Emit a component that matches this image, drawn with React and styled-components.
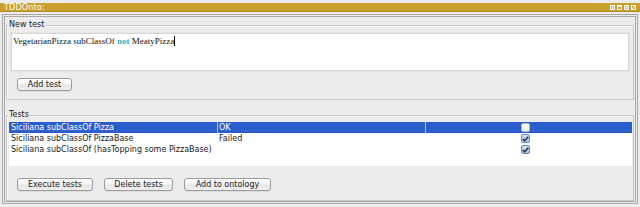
import React from "react";
import styled, { createGlobalStyle } from "styled-components";

const Global = createGlobalStyle`
  html, body { margin: 0; padding: 0; background: #ececec; }
  body { font-family: "DejaVu Sans", "Liberation Sans", sans-serif; font-size: 8px; color: #1a1a1a; }
  * { box-sizing: border-box; }
`;

const Window = styled.div`
  width: 640px;
  height: 207px;
  padding-top: 3px;
  background: #ececec;
  overflow: hidden;
`;

const TitleBar = styled.div`
  height: 9px;
  background: #cb9f2b;
  border-bottom: 1px solid #b58d22;
  display: flex;
  align-items: center;
  justify-content: space-between;
  padding: 0 4px 0 4px;
  color: #ffffff;
  font-size: 8px;
  line-height: 9px;
  letter-spacing: 0.2px;
`;

const Panel = styled.div`
  margin: 2px 2px 0 2px;
  height: 190px;
  border: 3px double #a9a9a9;
  padding: 0 1px 1px 1px;
  display: flex;
  flex-direction: column;
`;

const Group = styled.fieldset`
  margin: ${(p) => p.$top}px 0 0 0;
  padding: 0 1px;
  border: 1px solid #c9c9c9;
  box-shadow: inset 1px 1px 0 #f8f8f8;
  min-width: 0;
  flex: ${(p) => (p.$grow ? 1 : "none")};
  display: flex;
  flex-direction: column;
`;

const Legend = styled.legend`
  padding: 0 1px;
  margin-left: 0;
  font-size: 8px;
  line-height: 12px;
  color: #222;
`;

const NewBody = styled.div`
  padding: 2px 3px 8px 3px;
`;

const Editor = styled.div`
  height: 38px;
  background: #ffffff;
  border: 1px solid #d6d6d6;
  outline: 1px dotted #e0e0e0;
  padding: 2px 1px;
  font-family: "Liberation Serif", "Times New Roman", serif;
  font-size: 9px;
  line-height: 11px;
  color: #111;
`;

const Keyword = styled.span`
  color: #2fb3c6;
  font-weight: bold;
`;

const Caret = styled.span`
  display: inline-block;
  width: 1px;
  height: 10px;
  background: #000;
  vertical-align: -2px;
`;

const ButtonRow = styled.div`
  display: flex;
  gap: ${(p) => p.$gap || 11}px;
  margin-top: ${(p) => p.$top}px;
  padding-left: ${(p) => p.$left}px;
`;

const Button = styled.button`
  width: ${(p) => p.$w}px;
  height: 13px;
  padding: 0;
  margin: 0;
  border: 1px solid #9c9c9c;
  border-radius: 3px;
  background: linear-gradient(#ffffff 0%, #f6f6f6 45%, #e6e6e6 55%, #efefef 100%);
  font-family: "DejaVu Sans", "Liberation Sans", sans-serif;
  font-size: 8px;
  line-height: 11px;
  color: #222;
  box-shadow: 0 1px 0 rgba(0,0,0,0.06);
`;

const TestsBody = styled.div`
  padding: 1px 0 9px 1px;
  flex: 1;
  display: flex;
  flex-direction: column;
`;

const Table = styled.div`
  height: 44px;
  background: #ffffff;
  display: flex;
  flex-direction: column;
`;

const Row = styled.div`
  display: grid;
  grid-template-columns: 208px 208px 1fr;
  height: 11px;
  line-height: 11px;
  color: ${(p) => (p.$sel ? "#ffffff" : "#1a1a1a")};
  background-color: ${(p) => (p.$sel ? "#2a5dcc" : "transparent")};
  background-image: ${(p) =>
    p.$sel
      ? "repeating-linear-gradient(90deg, rgba(255,255,255,0.18) 0 1px, transparent 1px 4px)"
      : "none"};
  background-size: 100% 1px;
  background-position: 0 8px;
  background-repeat: no-repeat;
`;

const Cell = styled.div`
  padding-left: ${(p) => p.$pad || 1}px;
  white-space: nowrap;
  overflow: hidden;
  border-left: ${(p) => (p.$sep && p.$sel ? "1px solid #b9c9ee" : "1px solid transparent")};
  display: flex;
  align-items: center;
  justify-content: ${(p) => (p.$center ? "center" : "flex-start")};
`;

const Check = styled.span`
  width: 9px;
  height: 9px;
  border-radius: 2px;
  border: 1px solid ${(p) => (p.$on ? "#6e8db6" : "#b9b9b9")};
  background: ${(p) =>
    p.$on ? "linear-gradient(#cfe0f7, #9dbbe6)" : "linear-gradient(#ffffff, #ececec)"};
  display: flex;
  align-items: center;
  justify-content: center;
  margin-left: -9px;
`;

const Icons = styled.div`
  display: flex;
  gap: 2px;
  align-items: center;
`;

function WinIcon({ kind }) {
  return (
    <svg width="5" height="5" viewBox="0 0 5 5">
      <rect x="0.5" y="0.5" width="4" height="4" fill="none" stroke="#fff" strokeWidth="1" />
      {kind === 0 && <line x1="2.5" y1="0" x2="2.5" y2="5" stroke="#fff" />}
      {kind === 1 && <rect x="0" y="0" width="5" height="2" fill="#fff" />}
      {kind === 2 && <rect x="1.5" y="1.5" width="2" height="2" fill="#fff" />}
      {kind === 3 && <line x1="1" y1="4" x2="4" y2="1" stroke="#fff" />}
    </svg>
  );
}

function Tick() {
  return (
    <svg width="7" height="6" viewBox="0 0 7 6">
      <path d="M0.8 3 L2.6 4.8 L6.3 0.8" fill="none" stroke="#1d2a3a" strokeWidth="1.4" />
    </svg>
  );
}

const rows = [
  { name: "Siciliana subClassOf Pizza", res: "OK", on: false, sel: true },
  { name: "Siciliana subClassOf PizzaBase", res: "Failed", on: true },
  { name: "Siciliana subClassOf (hasTopping some PizzaBase)", res: "", on: true },
];

export default function App() {
  return (
    <Window>
      <Global />
      <TitleBar>
        <span>TDDOnto:</span>
        <Icons>
          {[0, 1, 2, 3].map((k) => (
            <WinIcon key={k} kind={k} />
          ))}
        </Icons>
      </TitleBar>
      <Panel>
        <Group $top={2}>
          <Legend>New test</Legend>
          <NewBody>
            <Editor>
              VegetarianPizza subClassOf <Keyword>not</Keyword> MeatyPizza
              <Caret />
            </Editor>
            <ButtonRow $top={7} $left={6}>
              <Button $w={55}>Add test</Button>
            </ButtonRow>
          </NewBody>
        </Group>
        <Group $top={9} $grow>
          <Legend>Tests</Legend>
          <TestsBody>
            <Table>
              {rows.map((r) => (
                <Row key={r.name} $sel={r.sel}>
                  <Cell>{r.name}</Cell>
                  <Cell $sep $sel={r.sel}>{r.res}</Cell>
                  <Cell $sep $sel={r.sel} $center>
                    <Check $on={r.on}>{r.on && <Tick />}</Check>
                  </Cell>
                </Row>
              ))}
            </Table>
            <ButtonRow $top={12} $left={8}>
              <Button $w={76}>Execute tests</Button>
              <Button $w={69}>Delete tests</Button>
              <Button $w={87}>Add to ontology</Button>
            </ButtonRow>
          </TestsBody>
        </Group>
      </Panel>
    </Window>
  );
}
